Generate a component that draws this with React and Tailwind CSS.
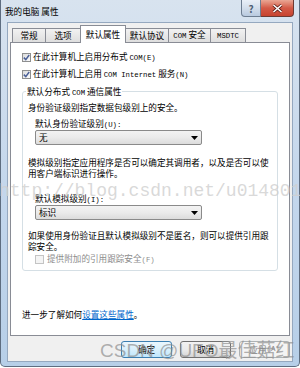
import React from 'react';

const font = "font-['Noto_Sans_CJK_SC',sans-serif]";

// latin runs in the old dialog font look half-width and monospaced
function L({ children }) {
  return <span className="font-['Liberation_Mono',monospace] text-[7.3px]">{children}</span>;
}

function Check({ checked, disabled }) {
  return (
    <span
      className={`flex items-center justify-center w-[9px] h-[9px] shrink-0 border ${
        disabled ? 'border-[#c4c4c4] bg-[#f4f4f4]' : 'border-[#8e8f8f] bg-gradient-to-br from-[#dcdcdc] to-[#fbfbfb]'
      }`}
    >
      {checked && (
        <svg width="7" height="7" viewBox="0 0 7 7">
          <path d="M0.8 3.6 L2.8 5.6 L6.2 1" fill="none" stroke="#4a5f97" strokeWidth="1.5" />
        </svg>
      )}
    </span>
  );
}

function Select({ value }) {
  return (
    <div className="flex items-center justify-between w-[167px] h-[15px] ml-[7px] pl-[3px] pr-[3px] border border-[#8a8a8a] rounded-[2px] bg-gradient-to-b from-[#f3f3f3] via-[#ebebeb] to-[#dcdcdc]">
      <span>{value}</span>
      <svg width="7" height="4" viewBox="0 0 7 4">
        <path d="M0 0 H7 L3.5 4 Z" fill="#000" />
      </svg>
    </div>
  );
}

const tabs = [
  { label: '常规', w: 'w-[34px]' },
  { label: '选项', w: 'w-[36px]' },
  { label: '默认属性', w: 'w-[46px]', active: true },
  { label: '默认协议', w: 'w-[44px]' },
  { label: <><L>COM</L> 安全</>, w: 'w-[43px]' },
  { label: <L>MSDTC</L>, w: 'w-[36px]' },
];

function Button({ children, primary, disabled }) {
  let cls = 'border-[#707070] bg-gradient-to-b from-[#f2f2f2] via-[#ebebeb] to-[#d4d4d4] text-black';
  if (primary) cls = 'border-[#3c7fb1] bg-gradient-to-b from-[#eaf6fd] via-[#d9f0fc] to-[#bee6fd] text-black';
  if (disabled) cls = 'border-[#adb2b5] bg-[#f4f4f4] text-[#838383]';
  return (
    <div className={`flex items-center justify-center w-[51px] h-[17px] rounded-[3px] border ${cls}`}>
      {children}
    </div>
  );
}

export default function App() {
  return (
    <div className={`relative w-[300px] h-[368px] overflow-hidden bg-white text-[8.6px] leading-[11px] text-black ${font}`}>
      <div className="flex flex-col w-[300px] h-[367px] border-x border-b border-[#5e6d80] rounded-b-[5px] bg-gradient-to-b from-[#d8e3ef] via-[#c4d7ec] to-[#b7cfe8]">
        {/* title bar */}
        <div className="flex items-start justify-between h-[22px] shrink-0">
          <div className="pl-[4px] pt-[6px] text-[8.6px] leading-[11px] text-black">我的电脑 属性</div>
          <div className="flex mr-[5px]">
            <div className="flex items-center justify-center w-[20px] h-[17px] border border-t-0 border-[#6d7d91] rounded-bl-[4px] bg-gradient-to-b from-[#e9eff7] via-[#d3deeb] to-[#b9cadf] text-[10px] font-bold text-[#4e5f74]">
              ?
            </div>
            <div className="flex items-center justify-center w-[33px] h-[17px] border border-t-0 border-l-0 border-[#6d3a33] rounded-br-[4px] bg-gradient-to-b from-[#e9a694] via-[#d35a47] to-[#c7432f]">
              <svg width="11" height="9" viewBox="0 0 11 9">
                <path d="M1.5 1 L9.5 8 M9.5 1 L1.5 8" stroke="#5a1d16" strokeWidth="3" />
                <path d="M1.5 1 L9.5 8 M9.5 1 L1.5 8" stroke="#fff" strokeWidth="1.6" />
              </svg>
            </div>
          </div>
        </div>

        {/* client area */}
        <div className="flex flex-col ml-[6px] mr-[6px] h-[340px] border border-[#95a8bf] bg-[#f0f0f0]">
          {/* tabs */}
          <div className="flex items-end h-[19px] pt-[2px] pl-[4px]">
            {tabs.map((t, i) => (
              <div
                key={i}
                className={`flex items-center justify-center ${t.w} -mr-px border border-[#898c95] ${
                  t.active
                    ? 'relative z-10 h-[18px] -mb-px border-b-0 bg-white pb-[1px]'
                    : 'h-[14px] border-b-0 bg-gradient-to-b from-[#f2f2f2] to-[#dedede]'
                }`}
              >
                <span>{t.label}</span>
              </div>
            ))}
          </div>

          {/* panel */}
          <div className="flex flex-col mx-[2px] h-[294px] border border-[#898c95] bg-white px-[11px] pt-[9px]">
            <div className="flex items-center h-[11px] gap-[2px]">
              <Check checked />
              <span>在此计算机上启用分布式 <L>COM(E)</L></span>
            </div>
            <div className="flex items-center h-[11px] gap-[2px] mt-[6px]">
              <Check checked />
              <span>在此计算机上启用 <L>COM Internet</L> 服务<L>(N)</L></span>
            </div>

            <fieldset className="mt-[6px] border border-[#d5dfe5] rounded-[3px] pl-[5px] pt-[5px] pb-[5px]">
              <legend className="-ml-[2px] px-[1px] h-[11px]">默认分布式 <L>COM</L> 通信属性</legend>
              <div className="h-[11px]">身份验证级别指定数据包级别上的安全。</div>
              <div className="h-[11px] mt-[5px] ml-[7px]">默认身份验证级别<L>(U):</L></div>
              <div className="mt-[1px]">
                <Select value="无" />
              </div>
              <div className="mt-[12px]">
                模拟级别指定应用程序是否可以确定其调用者，以及是否可以使
                <br />
                用客户端标识进行操作。
              </div>
              <div className="h-[11px] mt-[14px] ml-[7px]">默认模拟级别<L>(I):</L></div>
              <div className="mt-[1px]">
                <Select value="标识" />
              </div>
              <div className="mt-[10px]">
                如果使用身份验证且默认模拟级别不是匿名，则可以提供引用跟
                <br />
                踪安全。
              </div>
              <div className="flex items-center h-[11px] gap-[3px] mt-[2px] ml-[7px] text-[#8d8d8d]">
                <Check disabled />
                <span>提供附加的引用跟踪安全<L>(F)</L></span>
              </div>
            </fieldset>

            <div className="mt-[38px] h-[11px]">
              进一步了解如何<span className="text-[#0066cc] underline">设置这些属性</span>。
            </div>
          </div>

          {/* buttons */}
          <div className="flex justify-end gap-[8px] mt-[5px] pr-[2px]">
            <Button primary>确定</Button>
            <Button>取消</Button>
            <Button disabled>应用<L>(A)</L></Button>
          </div>
        </div>
      </div>

      {/* watermarks */}
      <div className="absolute left-[-1px] top-[181px] whitespace-nowrap font-['Liberation_Mono',monospace] text-[18px] leading-[20px] text-[#cfcfcf]/80 pointer-events-none">
        http://blog.csdn.net/u014801365
      </div>
      <div className="absolute left-[100px] top-[340px] whitespace-nowrap font-['Liberation_Sans','Noto_Sans_CJK_SC',sans-serif] text-[19px] leading-[22px] text-[#8f8f8f]/70 pointer-events-none">
        CSDN @UFO最佳菇红
      </div>
    </div>
  );
}
